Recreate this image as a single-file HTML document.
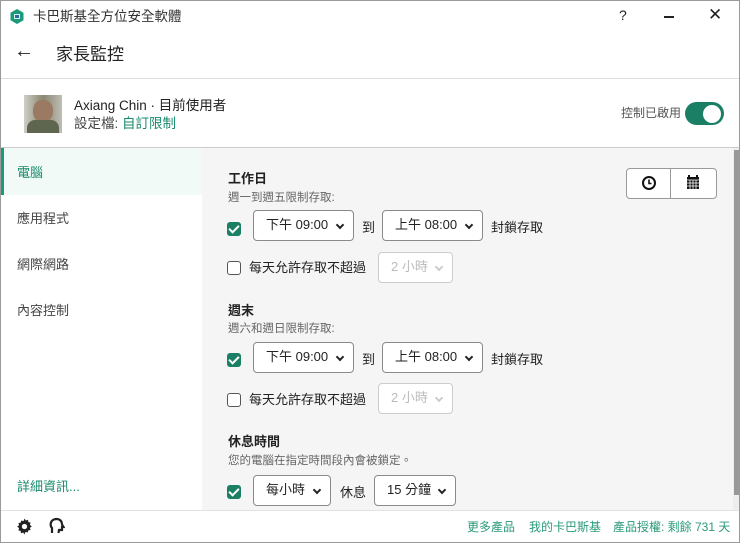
<!DOCTYPE html>
<html><head><meta charset="utf-8"><style>
*{box-sizing:border-box;margin:0;padding:0}
body{width:740px;height:543px;overflow:hidden;font-family:"Liberation Sans","Noto Sans CJK TC",sans-serif;color:#222;background:#fff;position:relative}
.a{position:absolute}
.frame{left:0;top:0;width:740px;height:543px;border:1px solid #9a9a9a}
.dd{position:absolute;height:31px;border:1px solid #8a8a8a;border-radius:4px;background:#fff;font-size:13px;line-height:27px;padding-left:12px;color:#222}
.dd:after{content:"";position:absolute;right:10px;top:11px;width:4px;height:4px;border-right:2px solid #222;border-bottom:2px solid #222;transform:rotate(45deg)}
.dd.dis{border-color:#ccc;color:#bbb}
.dd.dis:after{border-color:#ccc}
.cb{position:absolute;width:14px;height:14px;border-radius:3px;background:#1a7f64}
.cb:after{content:"";position:absolute;left:4px;top:1px;width:4px;height:8px;border-right:2px solid #fff;border-bottom:2px solid #fff;transform:rotate(45deg)}
.cb0{position:absolute;width:14px;height:14px;border-radius:3px;border:1.5px solid #555;background:#fff}
.t{position:absolute;font-size:13px;white-space:nowrap}
.h{position:absolute;font-size:13px;font-weight:bold;white-space:nowrap}
.s{position:absolute;font-size:11.5px;color:#666;white-space:nowrap}
.g{color:#1a8a6c}
</style></head><body>
<div class="a" style="left:202px;top:148px;width:531px;height:362px;background:#f5f5f5"></div>
<div class="a" style="left:733px;top:148px;width:6px;height:362px;background:#eee"></div>
<div class="a" style="left:734px;top:150px;width:5px;height:345px;background:#999"></div>
<div class="a" style="left:0;top:78px;width:740px;height:1px;background:#ddd"></div>
<div class="a" style="left:0;top:147px;width:740px;height:1px;background:#ccc"></div>
<div class="a" style="left:0;top:510px;width:740px;height:1px;background:#e2e2e2"></div>
<!-- title -->
<svg class="a" style="left:10px;top:9px" width="14" height="15" viewBox="0 0 14 15"><path d="M7 0L13.5 3.7V11.3L7 15L0.5 11.3V3.7Z" fill="#1a9a7a"/><rect x="4" y="5" width="6" height="5" fill="#fff" opacity=".85"/><rect x="5" y="6" width="4" height="3" fill="#2a6aa0"/></svg>
<div class="t" style="left:33px;top:5px;font-size:13.5px;color:#333">卡巴斯基全方位安全軟體</div>
<div class="t" style="left:619px;top:7px;font-size:14px">?</div>
<div class="a" style="left:664px;top:16px;width:10px;height:1.5px;background:#222"></div>
<div class="t" style="left:708px;top:5px;font-size:17px">✕</div>
<div class="t" style="left:14px;top:40px;font-size:20px">←</div>
<div class="t" style="left:56px;top:40px;font-size:17px">家長監控</div>
<!-- profile -->
<div class="a" style="left:24px;top:95px;width:38px;height:38px;background:linear-gradient(90deg,#cfcfc8,#8a8670 50%,#bfbdb5)"></div>
<div class="a" style="left:33px;top:100px;width:20px;height:22px;border-radius:45%;background:#9a7a62"></div>
<div class="a" style="left:27px;top:120px;width:32px;height:13px;border-radius:8px 8px 0 0;background:#5e6650"></div>
<div class="t" style="left:74px;top:94px;font-size:13.5px">Axiang Chin · 目前使用者</div>
<div class="t" style="left:74px;top:112px;font-size:13.5px;color:#444">設定檔: <span class="g">自訂限制</span></div>
<div class="t" style="left:621px;top:104px;font-size:12px;color:#555">控制已啟用</div>
<div class="a" style="left:685px;top:102px;width:39px;height:23px;border-radius:12px;background:#1a7f64"></div>
<div class="a" style="left:703px;top:105px;width:18px;height:18px;border-radius:50%;background:#fff"></div>
<!-- sidebar -->
<div class="a" style="left:1px;top:148px;width:201px;height:47px;background:#f1faf7"></div>
<div class="a" style="left:1px;top:148px;width:3px;height:47px;background:#1a9a7a"></div>
<div class="t g" style="left:17px;top:162px">電腦</div>
<div class="t" style="left:17px;top:208px;color:#444">應用程式</div>
<div class="t" style="left:17px;top:254px;color:#444">網際網路</div>
<div class="t" style="left:17px;top:300px;color:#444">內容控制</div>
<div class="t g" style="left:17px;top:476px">詳細資訊...</div>
<!-- toolbar buttons -->
<div class="a" style="left:626px;top:168px;width:91px;height:31px;border:1px solid #999;border-radius:4px;background:#fff"></div>
<div class="a" style="left:670px;top:168px;width:1px;height:31px;background:#999"></div>
<svg class="a" style="left:641px;top:175px" width="16" height="16" viewBox="0 0 16 16"><circle cx="8" cy="8" r="6" fill="none" stroke="#111" stroke-width="2"/><path d="M8 4.5V8.5H10.5" fill="none" stroke="#111" stroke-width="1.6"/></svg>
<svg class="a" style="left:686px;top:174px" width="14" height="16" viewBox="0 0 14 16"><rect x="1" y="3" width="12" height="12" fill="#111"/><path d="M3 1v3M11 1v3" stroke="#111" stroke-width="2"/><path d="M1 6H13M1 9H13M1 12H13M4 6V15M7 6V15M10 6V15" stroke="#fff" stroke-width=".8"/></svg>
<!-- workday -->
<div class="h" style="left:228px;top:168px">工作日</div>
<div class="s" style="left:228px;top:189px">週一到週五限制存取:</div>
<div class="cb" style="left:227px;top:222px"></div>
<div class="dd" style="left:253px;top:210px;width:101px">下午 09:00</div>
<div class="t" style="left:362px;top:217px">到</div>
<div class="dd" style="left:382px;top:210px;width:101px">上午 08:00</div>
<div class="t" style="left:491px;top:217px">封鎖存取</div>
<div class="cb0" style="left:227px;top:261px"></div>
<div class="t" style="left:249px;top:257px">每天允許存取不超過</div>
<div class="dd dis" style="left:378px;top:252px;width:75px">2 小時</div>
<!-- weekend -->
<div class="h" style="left:228px;top:300px">週末</div>
<div class="s" style="left:228px;top:320px">週六和週日限制存取:</div>
<div class="cb" style="left:227px;top:353px"></div>
<div class="dd" style="left:253px;top:342px;width:101px">下午 09:00</div>
<div class="t" style="left:362px;top:349px">到</div>
<div class="dd" style="left:382px;top:342px;width:101px">上午 08:00</div>
<div class="t" style="left:491px;top:349px">封鎖存取</div>
<div class="cb0" style="left:227px;top:393px"></div>
<div class="t" style="left:249px;top:389px">每天允許存取不超過</div>
<div class="dd dis" style="left:378px;top:383px;width:75px">2 小時</div>
<!-- break -->
<div class="h" style="left:228px;top:431px">休息時間</div>
<div class="s" style="left:228px;top:452px">您的電腦在指定時間段內會被鎖定。</div>
<div class="cb" style="left:227px;top:485px"></div>
<div class="dd" style="left:253px;top:475px;width:78px">每小時</div>
<div class="t" style="left:340px;top:482px">休息</div>
<div class="dd" style="left:374px;top:475px;width:82px">15 分鐘</div>
<!-- footer -->
<svg class="a" style="left:16px;top:518px" width="17" height="17" viewBox="0 0 16 16"><path d="M8 0.5l1.2 1.8 2.1-.6.3 2.1 2.1.6-.6 2.1L14.9 8l-1.8 1.2.6 2.1-2.1.3-.6 2.1-2.1-.6L8 15.5l-1.2-1.8-2.1.6-.3-2.1-2.1-.6.6-2.1L1.1 8l1.8-1.2-.6-2.1 2.1-.3.6-2.1 2.1.6Z" fill="#222"/><circle cx="8" cy="8" r="2.5" fill="#fff"/></svg>
<svg class="a" style="left:48px;top:517px" width="17" height="18" viewBox="0 0 17 18"><path d="M4 16V11C2 9 2 4 6 2.5 10 1 14 3 14 7.5L15.5 10H14v3h-3l-.5 3" fill="none" stroke="#222" stroke-width="2.2"/></svg>
<div class="t g" style="left:467px;top:518px;font-size:12px;color:#2a9a7a">更多產品</div>
<div class="t g" style="left:529px;top:518px;font-size:12px;color:#2a9a7a">我的卡巴斯基</div>
<div class="t g" style="left:613px;top:518px;font-size:12px;color:#2a9a7a">產品授權: 剩餘 731 天</div>
<div class="a frame"></div>
</body></html>
